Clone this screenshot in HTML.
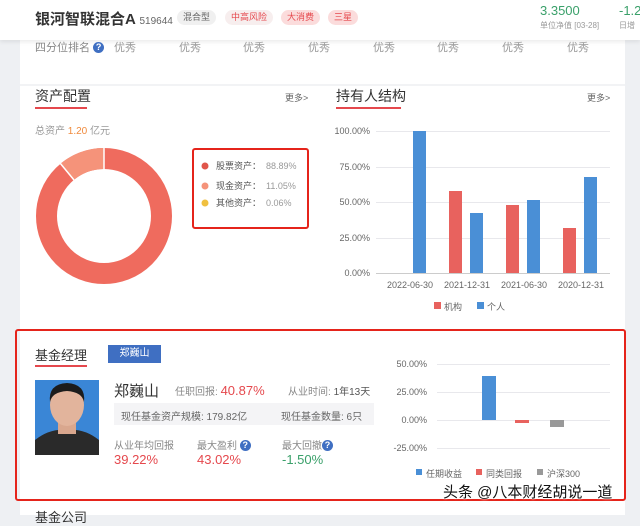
<!DOCTYPE html><html><head><meta charset="utf-8"><style>
*{margin:0;padding:0;box-sizing:border-box}
body{width:640px;height:515px;overflow:hidden;background:#eef0f3;font-family:"Liberation Sans","Noto Sans CJK SC",sans-serif;position:relative;color:#333}
.a{position:absolute;white-space:nowrap}
.g{color:#999}
.tag{position:absolute;top:10px;height:15px;font-size:9px;line-height:15px;padding:0 6px;border-radius:8px}
.q{display:inline-block;width:11px;height:11px;border-radius:50%;background:#3f6fc2;color:#fff;font-size:9px;line-height:11px;text-align:center;font-weight:bold;vertical-align:1px}
</style></head><body>
<div class="a" style="left:20px;top:40px;width:605px;height:475px;background:#fff"></div>
<div class="a" style="left:20px;top:84px;width:605px;height:2px;background:#f2f3f5"></div>
<div class="a" style="left:0;top:0;width:640px;height:40px;background:#fff;box-shadow:0 2px 4px rgba(0,0,0,.08)"></div>
<div class="a" style="left:35px;top:8px;font-size:15px;font-weight:bold;color:#333">银河智联混合A <span style="font-size:10px;font-weight:normal;color:#666">519644</span></div>
<div class="tag" style="left:177px;background:#f0f0f0;color:#666">混合型</div>
<div class="tag" style="left:225px;background:#f7eeee;color:#e5484d">中高风险</div>
<div class="tag" style="left:281px;background:#fbdcdc;color:#e5484d">大消费</div>
<div class="tag" style="left:328px;background:#fbdcdc;color:#e5484d">三星</div>
<div class="a" style="left:540px;top:3px;font-size:13px;color:#3aa06a">3.3500</div>
<div class="a" style="left:540px;top:20px;font-size:8px;color:#999">单位净值 [03-28]</div>
<div class="a" style="left:619px;top:3px;font-size:13px;color:#3aa06a">-1.2</div>
<div class="a" style="left:619px;top:20px;font-size:8px;color:#999">日增</div>
<div class="a g" style="left:35px;top:39px;font-size:11px;color:#888">四分位排名 <span class="q">?</span></div>
<div class="a" style="left:114px;top:39px;font-size:11px;color:#999">优秀</div>
<div class="a" style="left:179px;top:39px;font-size:11px;color:#999">优秀</div>
<div class="a" style="left:243px;top:39px;font-size:11px;color:#999">优秀</div>
<div class="a" style="left:308px;top:39px;font-size:11px;color:#999">优秀</div>
<div class="a" style="left:373px;top:39px;font-size:11px;color:#999">优秀</div>
<div class="a" style="left:437px;top:39px;font-size:11px;color:#999">优秀</div>
<div class="a" style="left:502px;top:39px;font-size:11px;color:#999">优秀</div>
<div class="a" style="left:567px;top:39px;font-size:11px;color:#999">优秀</div>

<div class="a" style="left:35px;top:86px;font-size:14px;color:#333">资产配置</div>
<div class="a" style="left:35px;top:107px;width:52px;height:2px;background:#e5484d"></div>
<div class="a" style="left:285px;top:91px;font-size:9px;color:#666">更多&gt;</div>
<div class="a" style="left:336px;top:86px;font-size:14px;color:#333">持有人结构</div>
<div class="a" style="left:336px;top:107px;width:65px;height:2px;background:#e5484d"></div>
<div class="a" style="left:587px;top:91px;font-size:9px;color:#666">更多&gt;</div>
<div class="a" style="left:35px;top:122px;font-size:10px;color:#999">总资产 <span style="color:#f08a3c">1.20</span> 亿元</div>

<svg class="a" style="left:0;top:0" width="640" height="515">
<circle cx="104" cy="216" r="57.5" fill="none" stroke="#ef6b5e" stroke-width="21"/>
<circle cx="104" cy="216" r="57.5" fill="none" stroke="#f5937a" stroke-width="21" stroke-dasharray="39.9 400" transform="rotate(-130 104 216)"/>
<line x1="104" y1="147" x2="104" y2="170" stroke="#fff" stroke-width="1.5"/>
<line x1="74" y1="180" x2="60" y2="163" stroke="#fff" stroke-width="1.5"/>
<rect x="193" y="149" width="115" height="79" rx="2" fill="none" stroke="#e5241b" stroke-width="2"/>
<circle cx="205" cy="166" r="3.5" fill="#e0554a"/><circle cx="205" cy="186" r="3.5" fill="#f5937a"/><circle cx="205" cy="203" r="3.5" fill="#f0c040"/>
<g font-size="9" fill="#555" font-family="Liberation Sans,Noto Sans CJK SC,sans-serif"><text x="216" y="169">股票资产：</text><text x="216" y="189">现金资产：</text><text x="216" y="206">其他资产：</text></g>
<g font-size="9" fill="#999" font-family="Liberation Sans,sans-serif"><text x="266" y="169">88.89%</text><text x="266" y="189">11.05%</text><text x="266" y="206">0.06%</text></g>
<g stroke="#e8e8ec" stroke-width="1"><line x1="376" y1="131.5" x2="610" y2="131.5"/><line x1="376" y1="167.5" x2="610" y2="167.5"/><line x1="376" y1="202.5" x2="610" y2="202.5"/><line x1="376" y1="238.5" x2="610" y2="238.5"/></g>
<line x1="376" y1="273.5" x2="610" y2="273.5" stroke="#ccc"/>
<g font-size="9" fill="#666" text-anchor="end" font-family="Liberation Sans,sans-serif"><text x="370" y="134">100.00%</text><text x="370" y="170">75.00%</text><text x="370" y="205">50.00%</text><text x="370" y="241">25.00%</text><text x="370" y="276">0.00%</text></g>
<g font-size="9" fill="#666" text-anchor="middle" font-family="Liberation Sans,sans-serif"><text x="410" y="288">2022-06-30</text><text x="467" y="288">2021-12-31</text><text x="524" y="288">2021-06-30</text><text x="581" y="288">2020-12-31</text></g>
<g fill="#4a8fd6"><rect x="413" y="131" width="13" height="142"/><rect x="470" y="213" width="13" height="60"/><rect x="527" y="200" width="13" height="73"/><rect x="584" y="177" width="13" height="96"/></g>
<g fill="#e8625e"><rect x="449" y="191" width="13" height="82"/><rect x="506" y="205" width="13" height="68"/><rect x="563" y="228" width="13" height="45"/></g>
<rect x="434" y="302" width="7" height="7" fill="#e8625e"/><rect x="477" y="302" width="7" height="7" fill="#4a8fd6"/>
<g font-size="9" fill="#666" font-family="Liberation Sans,Noto Sans CJK SC,sans-serif"><text x="444" y="310">机构</text><text x="487" y="310">个人</text></g>

<rect x="16" y="330" width="609" height="170" rx="2" fill="none" stroke="#e5241b" stroke-width="2"/>
<g stroke="#e8e8ec"><line x1="437" y1="364.5" x2="610" y2="364.5"/><line x1="437" y1="392.5" x2="610" y2="392.5"/><line x1="437" y1="420.5" x2="610" y2="420.5"/><line x1="437" y1="448.5" x2="610" y2="448.5"/></g>
<g font-size="9" fill="#666" text-anchor="end" font-family="Liberation Sans,sans-serif"><text x="427" y="367">50.00%</text><text x="427" y="395">25.00%</text><text x="427" y="423">0.00%</text><text x="427" y="451">-25.00%</text></g>
<rect x="482" y="376" width="14" height="44" fill="#4a8fd6"/>
<rect x="515" y="420" width="14" height="3" fill="#e8625e"/>
<rect x="550" y="420" width="14" height="7" fill="#999"/>
<rect x="416" y="469" width="6" height="6" fill="#4a8fd6"/><rect x="476" y="469" width="6" height="6" fill="#e8625e"/><rect x="537" y="469" width="6" height="6" fill="#999"/>
<g font-size="9" fill="#666" font-family="Liberation Sans,Noto Sans CJK SC,sans-serif"><text x="426" y="477">任期收益</text><text x="486" y="477">同类回报</text><text x="547" y="477">沪深300</text></g>
<rect x="35" y="380" width="64" height="75" fill="#3a86d6"/>
<path d="M35 455 L35 440 Q50 428 67 430 Q84 428 99 440 L99 455Z" fill="#2a2a2a"/>
<rect x="58" y="420" width="18" height="14" fill="#d9a78e"/>
<ellipse cx="67" cy="405" rx="17" ry="21" fill="#e2b49c"/>
<path d="M50 402 Q48 384 67 383 Q86 384 84 402 Q82 392 67 391 Q52 392 50 402Z" fill="#1c1c1c"/>
</svg>

<div class="a" style="left:35px;top:345px;font-size:13px;color:#333">基金经理</div>
<div class="a" style="left:35px;top:365px;width:52px;height:2px;background:#e5484d"></div>
<div class="a" style="left:108px;top:345px;width:53px;height:18px;background:#3f6fc2;color:#fff;font-size:10px;line-height:18px;text-align:center">郑巍山</div>
<div class="a" style="left:114px;top:380px;font-size:15px;color:#333">郑巍山</div>
<div class="a" style="left:175px;top:383px;font-size:10px;color:#888">任职回报: <span style="color:#e5484d;font-size:13px">40.87%</span></div>
<div class="a" style="left:288px;top:383px;font-size:10px;color:#888">从业时间: <span style="color:#555">1年13天</span></div>
<div class="a" style="left:114px;top:403px;width:260px;height:22px;background:#f4f4f6"></div>
<div class="a" style="left:121px;top:408px;font-size:10px;color:#666">现任基金资产规模: 179.82亿</div>
<div class="a" style="left:281px;top:408px;font-size:10px;color:#666">现任基金数量: 6只</div>
<div class="a" style="left:114px;top:437px;font-size:10px;color:#888">从业年均回报</div>
<div class="a" style="left:197px;top:437px;font-size:10px;color:#888">最大盈利 <span class="q">?</span></div>
<div class="a" style="left:282px;top:437px;font-size:10px;color:#888">最大回撤<span class="q">?</span></div>
<div class="a" style="left:114px;top:452px;font-size:13px;color:#e5484d">39.22%</div>
<div class="a" style="left:197px;top:452px;font-size:13px;color:#e5484d">43.02%</div>
<div class="a" style="left:282px;top:452px;font-size:13px;color:#3aa06a">-1.50%</div>
<div class="a" style="left:443px;top:481px;font-size:15px;color:#111;text-shadow:0 0 2px #fff,0 0 2px #fff">头条 @八本财经胡说一道</div>
<div class="a" style="left:35px;top:507px;font-size:13px;color:#333">基金公司</div>
</body></html>
